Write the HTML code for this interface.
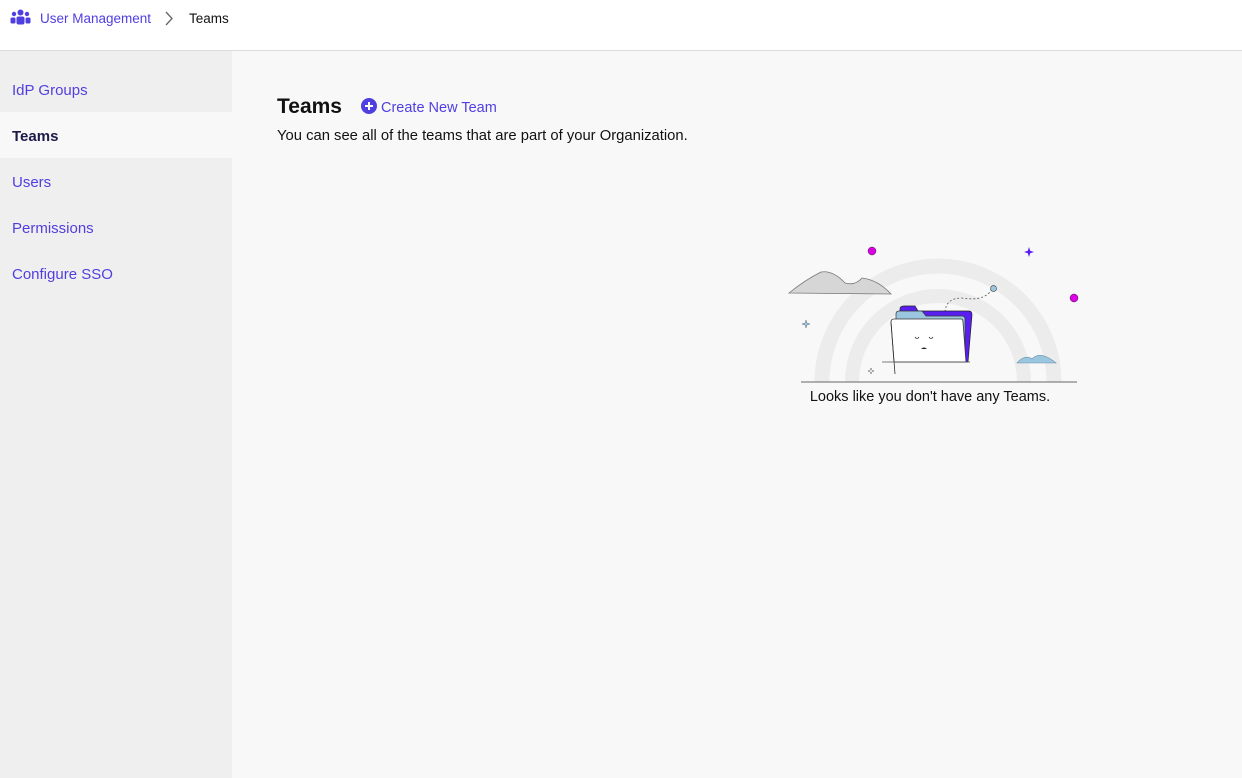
<!DOCTYPE html>
<html><head><meta charset="utf-8"><style>
*{margin:0;padding:0;box-sizing:border-box}
body{width:1242px;height:778px;overflow:hidden;font-family:"Liberation Sans",sans-serif;background:#f8f8f8;position:relative}
.top{position:absolute;left:0;top:0;width:1242px;height:51px;background:#fff;border-bottom:1px solid #ddd}
.bc{position:absolute;top:11px;font-size:13.5px}
.side{position:absolute;left:0;top:51px;width:232px;height:727px;background:#efefef}
.side div{height:46px;line-height:46px;padding-left:12px;font-size:15px;color:#4f3fe0}
.side .act{background:#f8f8f8;color:#1c1b4a;font-weight:bold}
h1{position:absolute;left:277px;top:95px;font-size:21px;font-weight:bold;color:#111}
.cr{position:absolute;left:361px;top:98px;font-size:14.5px;color:#4f3fe0}
.desc{position:absolute;left:277px;top:128px;font-size:14.8px;color:#111}
.empty{position:absolute;left:780px;top:389px;width:300px;text-align:center;font-size:14.5px;color:#111}
</style></head><body>
<div class="top">
<svg style="position:absolute;left:10px;top:9px" width="21" height="17" viewBox="0 0 21 17" fill="#4f3fe0"><circle cx="10.5" cy="3.5" r="3"/><circle cx="4" cy="5" r="2.2"/><circle cx="17" cy="5" r="2.2"/><rect x="6.5" y="7.5" width="8" height="8" rx="2"/><rect x="0.5" y="8.5" width="5" height="6" rx="1.5"/><rect x="15.5" y="8.5" width="5" height="6" rx="1.5"/></svg>
<span class="bc" style="left:40px;color:#4f3fe0">User Management</span>
<svg style="position:absolute;left:164px;top:11px" width="10" height="15"><path d="M2 1l6 6.5-6 6.5" stroke="#666" stroke-width="1.3" fill="none"/></svg>
<span class="bc" style="left:189px;color:#111">Teams</span>
</div>
<div class="side"><div style="margin-top:15px;position:relative;top:2px">IdP Groups</div><div class="act" style="line-height:50px">Teams</div><div style="line-height:50px">Users</div><div style="line-height:50px">Permissions</div><div style="line-height:50px">Configure SSO</div></div>
<h1>Teams</h1>
<div class="cr"><svg width="16" height="16" style="vertical-align:-2px;margin-right:4px"><circle cx="8" cy="8" r="8" fill="#4f3fe0"/><path d="M8 4v8M4 8h8" stroke="#fff" stroke-width="2"/></svg>Create New Team</div>
<div class="desc">You can see all of the teams that are part of your Organization.</div>
<svg style="position:absolute;left:780px;top:235px" width="310" height="160" viewBox="780 235 310 160">
<path d="M822 382A116 116 0 0 1 1054 382" stroke="#ececec" stroke-width="15" fill="none"/>
<path d="M852 382A86 86 0 0 1 1024 382" stroke="#ececec" stroke-width="14" fill="none"/>
<path d="M789 293Q805 280 821 272Q833 270 845 283Q855 286 862 278Q878 280 891 294Z" fill="#d6d6d6" stroke="#777" stroke-width="0.8"/>
<path d="M1017 363Q1025 354 1032 359Q1040 350 1056 363Z" fill="#9bc6e0" stroke="#6a8fa8" stroke-width="0.6"/>
<line x1="801" y1="382" x2="1077" y2="382" stroke="#666" stroke-width="1"/>
<path d="M945 312Q946 298 962 298Q985 302 993 288" stroke="#555" stroke-dasharray="2 2" fill="none" stroke-width="0.8"/>
<circle cx="993.5" cy="288.5" r="3" fill="#9bc6e0" stroke="#555" stroke-width="0.7"/>
<path d="M900 315V309Q900 306 904 306H915L918 311H969Q972 311 972 315L968 362H900Z" fill="#5a1ff0" stroke="#222" stroke-width="0.7"/>
<path d="M896 320V314Q896 311 899 311H922L926 316H962Q965 316 965 319V362H896Z" fill="#9bc6e0" stroke="#333" stroke-width="0.7"/>
<path d="M891 322Q891 319 894 319H961Q963 319 963 322L966 362H894Z" fill="#fff" stroke="#333" stroke-width="0.8"/>
<path d="M891 322L895 374" stroke="#333" stroke-width="0.8"/>
<line x1="882" y1="362" x2="970" y2="362" stroke="#555" stroke-width="0.8"/>
<path d="M915 337q2 3 4 0M929 337q2 3 4 0" stroke="#333" fill="none" stroke-width="0.8"/>
<path d="M921 349q3-3 6 0z" fill="#222"/>
<circle cx="872" cy="251" r="4" fill="#e000e8" stroke="#333" stroke-width="0.5"/>
<circle cx="1074" cy="298" r="4" fill="#e000e8" stroke="#333" stroke-width="0.5"/>
<path d="M1029 247l1.2 3.8 3.8 1.2-3.8 1.2-1.2 3.8-1.2-3.8-3.8-1.2 3.8-1.2z" fill="#5a1ff0"/>
<path d="M806 320l1 3 3 1-3 1-1 3-1-3-3-1 3-1z" fill="#9bc6e0" stroke="#555" stroke-width="0.4"/>
<path d="M871 368l.8 2.2 2.2.8-2.2.8-.8 2.2-.8-2.2-2.2-.8 2.2-.8z" fill="#fff" stroke="#555" stroke-width="0.5"/>
</svg>
<div class="empty">Looks like you don't have any Teams.</div>
</body></html>
